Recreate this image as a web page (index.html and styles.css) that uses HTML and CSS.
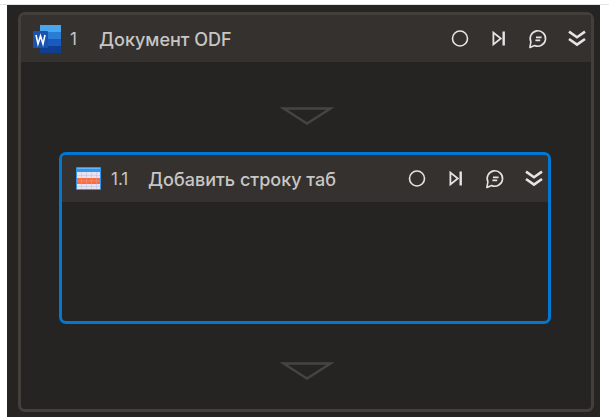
FILE: index.html
```html
<!DOCTYPE html>
<html lang="ru">
<head>
<meta charset="utf-8">
<title>Документ ODF</title>
<link rel="stylesheet" href="styles.css">
</head>
<body>
<svg class="sprite" aria-hidden="true">
  <symbol id="circle" viewBox="0 0 20 20"><circle cx="10" cy="9.5" r="7.5" fill="none" stroke="currentColor" stroke-width="1.6"/></symbol>
  <symbol id="step" viewBox="0 0 20 20"><path d="M4.4 3.6V15.4L11.8 9.5Z" fill="none" stroke="currentColor" stroke-width="1.8"/><path d="M14.7 2.6V16.4" fill="none" stroke="currentColor" stroke-width="2.4"/></symbol>
  <symbol id="comment" viewBox="0 0 20 20"><path d="M1.9 18.4L2.9 12.8A7.7 7.7 0 1 1 6.6 16.5Z" fill="none" stroke="currentColor" stroke-width="1.6" stroke-linejoin="round"/><path d="M8 8.4H13.6M7.4 11.4H12.2" fill="none" stroke="currentColor" stroke-width="1.6"/></symbol>
  <symbol id="collapse" viewBox="0 0 20 20"><path d="M2 2.6L10 8.2L18 2.6M2 10L10 15.6L18 10" fill="none" stroke="currentColor" stroke-width="2.6"/></symbol>
  <symbol id="drop" viewBox="0 0 56 18"><path d="M5.5 1.5H52.5L29 16.5Z" fill="none" stroke="currentColor" stroke-width="2.4"/></symbol>
</svg>
<main class="canvas">
  <section class="card">
    <header class="card-header">
      <svg class="app-icon" viewBox="0 0 28 28" aria-hidden="true">
        <path fill="#48a6ef" d="M7 0H28V7H7Z"/>
        <path fill="#2b7cd3" d="M7 7H28V14H7Z"/>
        <path fill="#185abd" d="M7 14H28V21H7Z"/>
        <path fill="#103f91" d="M7 21H28V28H7Z"/>
        <rect x="0" y="6" width="15" height="17" rx="1" fill="#1853b0"/>
        <path d="M3 10L5 19L7.5 11L10 19L12 10" fill="none" stroke="#fff" stroke-width="1.6"/>
      </svg>
      <span class="number">1</span>
      <h1 class="title">Документ ODF</h1>
      <div class="actions">
        <button class="action" aria-label="Точка останова"><svg><use href="#circle"/></svg></button>
        <button class="action" aria-label="Пропустить"><svg><use href="#step"/></svg></button>
        <button class="action" aria-label="Комментарий"><svg><use href="#comment"/></svg></button>
        <button class="action" aria-label="Свернуть"><svg><use href="#collapse"/></svg></button>
      </div>
    </header>
    <div class="card-body">
      <svg class="drop" aria-hidden="true"><use href="#drop"/></svg>
      <section class="card card-selected">
        <header class="card-header">
          <svg class="app-icon" viewBox="0 0 28 28" aria-hidden="true">
            <rect x="2" y="2" width="25" height="23" rx="1" fill="#3194ed"/>
            <path fill="#65b5f7" d="M3 3H26V4H3Z"/>
            <path fill="#e6e2f2" d="M3 7H26V24H3Z"/>
            <path fill="#ff6c37" d="M3 13H26V19H3Z"/>
            <path d="M7.5 7V24M12.5 7V24M17.5 7V24M22.5 7V24M3 10.5H26M3 16H26M3 21.5H26" stroke="#b9b5dd" stroke-opacity=".4" stroke-width="1"/>
          </svg>
          <span class="number">1.1</span>
          <h2 class="title">Добавить строку таб</h2>
          <div class="actions">
            <button class="action" aria-label="Точка останова"><svg><use href="#circle"/></svg></button>
            <button class="action" aria-label="Пропустить"><svg><use href="#step"/></svg></button>
            <button class="action" aria-label="Комментарий"><svg><use href="#comment"/></svg></button>
            <button class="action" aria-label="Свернуть"><svg><use href="#collapse"/></svg></button>
          </div>
        </header>
        <div class="slot"></div>
      </section>
      <svg class="drop" aria-hidden="true"><use href="#drop"/></svg>
    </div>
  </section>
</main>
</body>
</html>
```
FILE: styles.css
```css
* {
  box-sizing: border-box;
}

body {
  margin: 4px 0 0;
  border-top: 1px solid #e4e4e4;
  background: #fff;
  font-family: Inter, Roboto, sans-serif;
}

.sprite {
  display: none;
}

.canvas {
  margin: 0 9px 0 7px;
  padding: 7px 6px 5px 11px;
  background: #252422;
}

.card {
  border: 3px solid #433f3b;
  border-radius: 7px;
  background: #252422;
  overflow: hidden;
}

.card-selected {
  margin: 27px 40px 38px 38px;
  border-color: #0078d4;
}

.card-header {
  display: flex;
  align-items: center;
  height: 47px;
  padding: 0 4px 0 12px;
  background: #35312e;
  color: #c8c6c4;
}

.app-icon {
  flex: none;
  width: 28px;
  height: 28px;
}

.number {
  flex: none;
  width: 38px;
  padding-left: 9px;
  font-size: 17px;
  line-height: 26px;
}

.title {
  flex: 1;
  min-width: 0;
  margin: 0;
  padding-top: 2px;
  font-size: 18px;
  font-weight: 500;
  line-height: 26px;
  white-space: nowrap;
  overflow: hidden;
}

.card-selected .number {
  width: 46px;
}

.card-selected .title {
  margin-right: 68px;
}

.actions {
  display: flex;
  flex: none;
  gap: 19px;
}

.action {
  width: 20px;
  height: 20px;
  padding: 0;
  border: 0;
  background: none;
  color: #e6e4e2;
}

.action svg {
  display: block;
  width: 20px;
  height: 20px;
}

.card-body {
  padding: 45px 0 29px;
}

.drop {
  display: block;
  width: 56px;
  height: 18px;
  margin: 0 auto;
  color: #454442;
}

.slot {
  height: 119px;
}
```
